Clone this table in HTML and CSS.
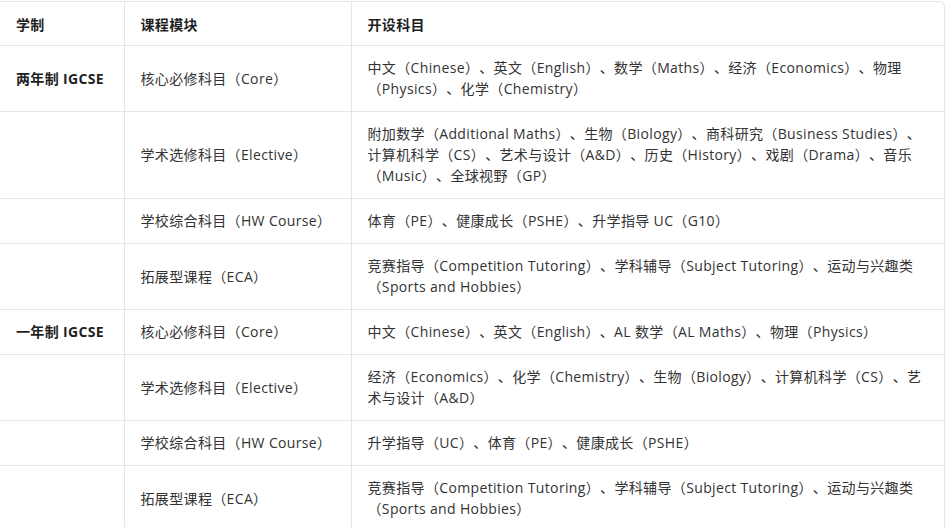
FILE: index.html
```html
<!DOCTYPE html>
<html lang="zh-CN">
<head>
<meta charset="utf-8">
<link rel="stylesheet" href="styles.css">
</head>
<body>
<div class="wrap">
<table class="grid">
<colgroup><col class="c1"><col class="c2"><col class="c3"></colgroup>
<thead>
<tr><th>学制</th><th>课程模块</th><th>开设科目</th></tr>
</thead>
<tbody>
<tr><td class="sys">两年制 IGCSE</td><td>核心必修科目（Core）</td><td>中文（Chinese）、英文（English）、数学（Maths）、经济（Economics）、物理（Physics）、化学（Chemistry）</td></tr>
<tr><td></td><td>学术选修科目（Elective）</td><td>附加数学（Additional Maths）、生物（Biology）、商科研究（Business Studies）、计算机科学（CS）、艺术与设计（A&amp;D）、历史（History）、戏剧（Drama）、音乐（Music）、全球视野（GP）</td></tr>
<tr><td></td><td>学校综合科目（HW Course）</td><td>体育（PE）、健康成长（PSHE）、升学指导 UC（G10）</td></tr>
<tr><td></td><td>拓展型课程（ECA）</td><td>竞赛指导（Competition Tutoring）、学科辅导（Subject Tutoring）、运动与兴趣类（Sports and Hobbies）</td></tr>
<tr><td class="sys">一年制 IGCSE</td><td>核心必修科目（Core）</td><td>中文（Chinese）、英文（English）、AL 数学（AL Maths）、物理（Physics）</td></tr>
<tr><td></td><td>学术选修科目（Elective）</td><td>经济（Economics）、化学（Chemistry）、生物（Biology）、计算机科学（CS）、艺术与设计（A&amp;D）</td></tr>
<tr><td></td><td>学校综合科目（HW Course）</td><td>升学指导（UC）、体育（PE）、健康成长（PSHE）</td></tr>
<tr><td></td><td>拓展型课程（ECA）</td><td>竞赛指导（Competition Tutoring）、学科辅导（Subject Tutoring）、运动与兴趣类（Sports and Hobbies）</td></tr>
</tbody>
</table>
</div>
</body>
</html>
```

FILE: styles.css
```css
html, body {
  margin: 0;
  padding: 0;
  background: #ffffff;
}
body {
  font-family: "Open Sans", "Noto Sans CJK SC", sans-serif;
  font-size: 14px;
  color: #333333;
  letter-spacing: 0.35px;
  text-spacing-trim: space-all;
}
.wrap {
  width: 944px;
  margin-top: 1px;
  border-top: 1px solid #e6e6e6;
  border-right: 1px solid #e6e6e6;
  border-top-right-radius: 6px;
  overflow: hidden;
}
.grid {
  width: 100%;
  border-collapse: collapse;
  table-layout: fixed;
}
.c1 { width: 124px; }
.c2 { width: 227px; }
.grid th,
.grid td {
  padding: 11px 16px 12px 16px;
  line-height: 21px;
  text-align: left;
  vertical-align: middle;
  border-bottom: 1px solid #e6e6e6;
  border-left: 1px solid #e6e6e6;
}
.grid th:first-child,
.grid td:first-child {
  border-left: none;
}
.grid th {
  font-weight: bold;
  color: #1f1f1f;
  padding-top: 12px;
  padding-bottom: 10px;
}
.grid td.sys {
  font-weight: bold;
  color: #1f1f1f;
}
```
